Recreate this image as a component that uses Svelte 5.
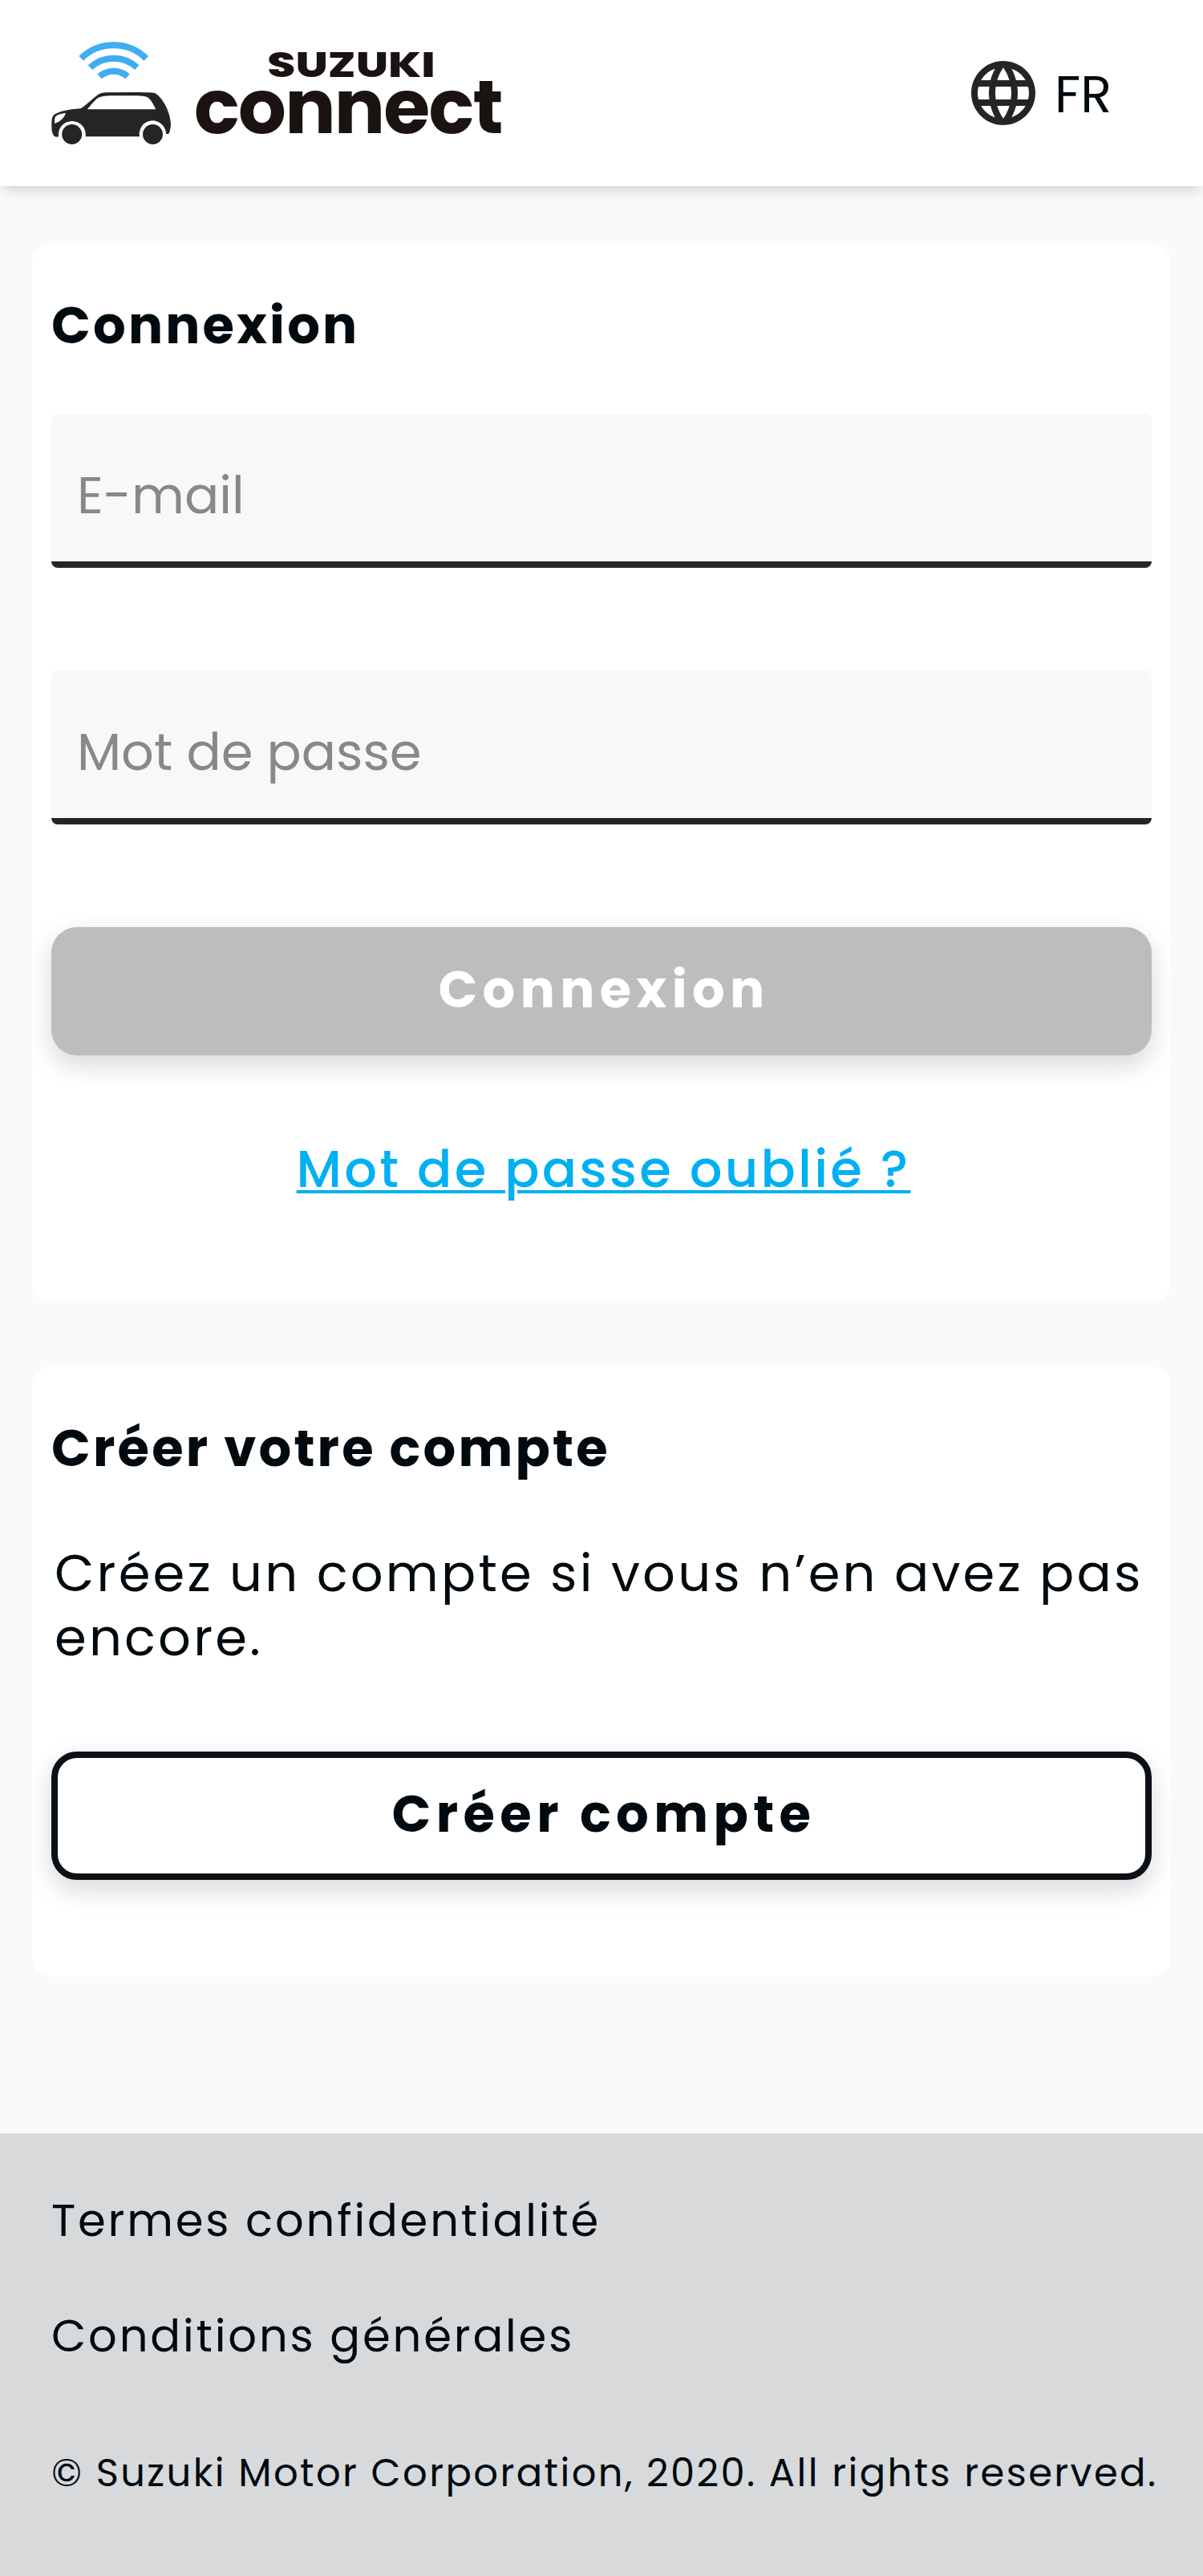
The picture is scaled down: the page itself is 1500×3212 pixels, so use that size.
<script>
  let email = ''
  let password = ''

  const links = ['Termes confidentialité', 'Conditions générales']
</script>

<header>
  <svg class="logo" viewBox="72 60 1686 396" role="img" aria-label="Suzuki Connect">
    <g class="waves">
      <path d="M183.500 128.500A174 174 0 0 1 426.500 128.500" />
      <path d="M217.500 162.500A128 128 0 0 1 392.500 162.500" />
      <path d="M252.500 196A80 80 0 0 1 357.500 196" />
    </g>
    <path
      class="car"
      fill-rule="evenodd"
      d="M73 375C73 362 74 350 78 344C92 327 135 319 182 316C200 305 222 282 240 269C250 260 262 256 280 256L400 255C425 256 446 256 459 258C490 274 519 335 519 375C518 392 514 411 509 411L501 411A50 50 0 1 0 402 421L200 421A51 51 0 1 0 99 421C88 424 82 421 78 412C73 402 73 388 73 375ZM206 319L463 319C455 303 446 283 434 275C426 269 405 269 375 268L300 268C270 268 252 271 240 281C228 292 217 306 206 319ZM84 372C100 367 118 356 126 333C105 335 92 340 86 349C84 355 84 364 84 372Z"
    />
    <circle class="car" cx="149" cy="412.500" r="37.500" />
    <circle class="car" cx="451.500" cy="412.500" r="37.500" />
    <text class="brand" x="880" y="198" textLength="628" lengthAdjust="spacingAndGlyphs">SUZUKI</text>
    <text class="product" x="606" y="408" textLength="1157" lengthAdjust="spacing">connect</text>
  </svg>

  <button class="language">
    <svg viewBox="0 0 24 24" aria-hidden="true">
      <path d="M11.990 2C6.470 2 2 6.480 2 12s4.470 10 9.990 10C17.520 22 22 17.520 22 12S17.520 2 11.990 2zm6.930 6h-2.950c-.32-1.250-.78-2.450-1.380-3.560 1.840.63 3.370 1.910 4.330 3.560zM12 4.040c.83 1.200 1.480 2.530 1.910 3.960h-3.820c.43-1.430 1.080-2.760 1.910-3.960zM4.260 14C4.100 13.360 4 12.690 4 12s.1-1.360.26-2h3.380c-.08.66-.14 1.320-.14 2s.06 1.340.14 2H4.260zm.82 2h2.950c.32 1.250.78 2.450 1.380 3.560-1.840-.63-3.370-1.900-4.330-3.560zm2.950-8H5.080c.96-1.660 2.490-2.930 4.330-3.560C8.810 5.550 8.350 6.750 8.030 8zM12 19.960c-.83-1.200-1.480-2.530-1.910-3.960h3.820c-.43 1.430-1.080 2.760-1.910 3.960zM14.340 14H9.660c-.09-.66-.16-1.320-.16-2s.07-1.350.16-2h4.680c.09.65.16 1.320.16 2s-.07 1.340-.16 2zm.25 5.560c.6-1.110 1.060-2.310 1.380-3.560h2.950c-.96 1.650-2.490 2.930-4.330 3.560zM16.360 14c.08-.66.14-1.320.14-2s-.06-1.340-.14-2h3.380c.16.64.26 1.310.26 2s-.1 1.360-.26 2h-3.380z" />
    </svg>
    <span>FR</span>
  </button>
</header>

<main>
  <form class="card" on:submit|preventDefault>
    <h2 class="login-title">Connexion</h2>
    <input type="email" placeholder="E-mail" aria-label="E-mail" bind:value={email}>
    <input type="password" placeholder="Mot de passe" aria-label="Mot de passe" bind:value={password}>
    <button class="btn primary" disabled={!email || !password}>Connexion</button>
    <a class="forgot" href="#forgot">Mot de passe oublié ?</a>
  </form>

  <section class="card">
    <h2>Créer votre compte</h2>
    <p>Créez un compte si vous n’en avez pas encore.</p>
    <button class="btn outline">Créer compte</button>
  </section>
</main>

<footer>
  <nav>
    {#each links as link}
      <a href="#legal">{link}</a>
    {/each}
  </nav>
  <small>© Suzuki Motor Corporation, 2020. All rights reserved.</small>
</footer>

<style>
  :global(body) {
    margin: 0;
    background: #fafafa;
    color: #000a0f;
    font-family: Poppins, Inter, sans-serif;
    font-size: 64px;
    line-height: 80px;
  }

  header {
    position: relative;
    display: flex;
    align-items: center;
    justify-content: space-between;
    box-sizing: border-box;
    height: 232px;
    padding: 0 113px 0 64px;
    background: #fff;
    box-shadow: 0 8px 16px -4px rgba(0, 0, 0, .18);
  }

  .logo {
    width: 562px;
    height: 132px;
    overflow: visible;
  }
  .logo text {
    fill: #1a1311;
  }
  .brand {
    font-size: 129px;
    font-weight: 800;
  }
  .product {
    font-size: 282px;
    font-weight: 700;
  }
  .waves {
    fill: none;
    stroke: #3fadf2;
    stroke-width: 24;
  }
  .car {
    fill: #252525;
  }

  button,
  input {
    box-sizing: border-box;
    margin: 0;
    border: 0;
    font: inherit;
    color: inherit;
  }

  .language {
    display: flex;
    align-items: center;
    gap: 16px;
    width: 184px;
    padding: 0;
    background: none;
  }
  .language svg {
    flex: none;
    width: 96px;
    height: 96px;
    fill: #252525;
  }
  .language span {
    padding-top: 3px;
  }

  main {
    display: flex;
    flex-direction: column;
    gap: 80px;
    padding: 72px 40px 196px;
  }

  .card {
    display: flex;
    flex-direction: column;
    box-sizing: border-box;
    height: 1320px;
    padding: 62px 24px 0;
    border-radius: 24px;
    background: #fff;
  }
  section.card {
    height: 760px;
  }

  h2 {
    margin: 0 0 76px;
    font-size: 64px;
    font-weight: 700;
    letter-spacing: .05em;
  }
  .login-title {
    margin-bottom: 70px;
  }

  input {
    height: 192px;
    margin-bottom: 128px;
    padding: 19px 32px 0;
    border-bottom: 8px solid #252525;
    border-radius: 8px;
    background: #f8f8f8;
  }
  input::placeholder {
    color: #888;
    opacity: 1;
  }

  .btn {
    height: 160px;
    padding: 0 0 5px 6px;
    border-radius: 32px;
    box-shadow: 0 12px 32px rgba(0, 0, 0, .16);
    font-weight: 700;
    letter-spacing: .1em;
  }
  .primary {
    background: #bcbdbf;
    color: #fff;
  }
  .outline {
    border: 8px solid #0c1116;
    background: #fff;
  }

  .forgot {
    align-self: center;
    margin: 102px 0 0 5px;
    color: #00b0f2;
    font-weight: 500;
    letter-spacing: .05em;
    text-decoration-thickness: 4px;
    text-underline-offset: 4px;
  }

  p {
    margin: 0 0 102px;
    padding-left: 4px;
    letter-spacing: .05em;
  }

  footer {
    display: flex;
    flex-direction: column;
    box-sizing: border-box;
    height: 552px;
    padding: 69px 0 0 64px;
    background: #d8d9db;
  }
  nav {
    display: flex;
    flex-direction: column;
    gap: 64px;
    margin-bottom: 91px;
    font-size: 56px;
    letter-spacing: .05em;
  }
  nav a {
    color: inherit;
    text-decoration: none;
  }
  small {
    font-size: 48px;
    letter-spacing: .05em;
    white-space: nowrap;
  }
</style>
